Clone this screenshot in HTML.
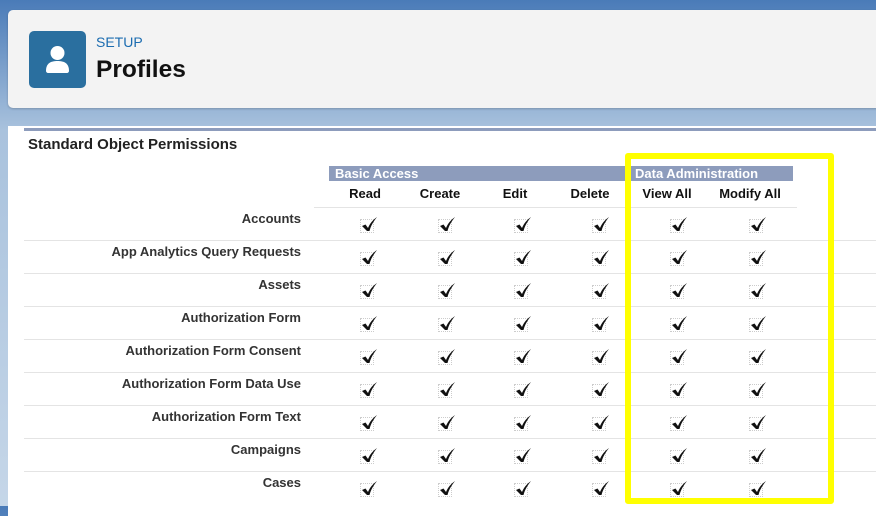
<!DOCTYPE html><html><head><style>
body{margin:0;width:876px;height:506px;overflow:hidden;background:linear-gradient(#4a7bb8,#a9c2dd 130px,#c5d6e8);font-family:"Liberation Sans",Arial,sans-serif;position:relative}
.card{position:absolute;left:8px;top:10px;width:880px;height:98px;background:#f3f3f3;border-radius:5px;box-shadow:0 1px 2px rgba(0,0,0,.2)}
.icon{position:absolute;left:29px;top:31px;width:57px;height:57px;background:#2a6f9f;border-radius:5px}
.setup{position:absolute;left:96px;top:34px;font-size:14px;color:#1b6cb0}
.title{position:absolute;left:96px;top:56px;font-size:24.5px;font-weight:bold;color:#111}
.panel{position:absolute;left:8px;top:126px;width:880px;height:390px;background:#fff}
.topline{position:absolute;left:24px;top:128px;width:860px;height:3px;background:#8d9cbc}
.h{position:absolute;font-weight:bold;font-size:15px;color:#222;left:28px;top:136px}
.bar{position:absolute;top:166px;height:15px;background:#8d9cbc;color:#fff;font-weight:bold;font-size:13px;line-height:15px;padding-left:6px;box-sizing:border-box}
.col{position:absolute;top:186px;font-weight:bold;font-size:13px;color:#111;text-align:center;width:80px}
.line{position:absolute;height:1px;background:#e4e4e4}
.lab{position:absolute;right:575px;font-weight:bold;font-size:13px;color:#333;white-space:nowrap}
.ck{position:absolute;width:14px;height:14px;border:1px dotted #ccc;box-sizing:border-box}
.ck svg{position:absolute;left:-1px;top:-4px}
.yb{position:absolute;left:625px;top:153px;width:209px;height:351px;border:6px solid #ffff00;box-sizing:border-box;border-radius:3px}
</style></head><body>
<div class="card"></div>
<div class="icon"><svg width="57" height="57"><circle cx="28.5" cy="22" r="7" fill="#fff"/><path d="M17 40c0-8 5-10 11.5-10S40 32 40 40c0 1-1 2-2 2H19c-1 0-2-1-2-2z" fill="#fff"/></svg></div>
<div class="setup">SETUP</div><div class="title">Profiles</div>
<div class="panel"></div><div class="topline"></div>
<div class="h">Standard Object Permissions</div>
<div class="bar" style="left:329px;width:298px">Basic Access</div>
<div class="bar" style="left:629px;width:164px">Data Administration</div>
<div class="col" style="left:325px">Read</div><div class="col" style="left:400px">Create</div><div class="col" style="left:475px">Edit</div><div class="col" style="left:550px">Delete</div><div class="col" style="left:627px">View All</div><div class="col" style="left:710px">Modify All</div>
<div class="line" style="left:314px;width:483px;top:207px"></div>
<div id="rows"></div>
<script>
var L=["Accounts","App Analytics Query Requests","Assets","Authorization Form","Authorization Form Consent","Authorization Form Data Use","Authorization Form Text","Campaigns","Cases"];
var X=[360,438,514,592,670,749],h="";
L.forEach(function(t,i){var y=207+i*33;
if(i>0)h+='<div class="line" style="left:24px;width:860px;top:'+y+'px"></div>';
h+='<div class="lab" style="top:'+(y+4)+'px">'+t+'</div>';
X.forEach(function(x){h+='<div class="ck" style="left:'+x+'px;top:'+(y+12)+'px"><svg width="18" height="18"><path d="M2 10l3.5-1.5 2.5 3.5c2-5 5-8 9-11-3 4-6 8-7.5 14h-2.5z" fill="#111"/></svg></div>';});});
document.getElementById("rows").innerHTML=h;
</script>
<div class="yb"></div>
</body></html>
